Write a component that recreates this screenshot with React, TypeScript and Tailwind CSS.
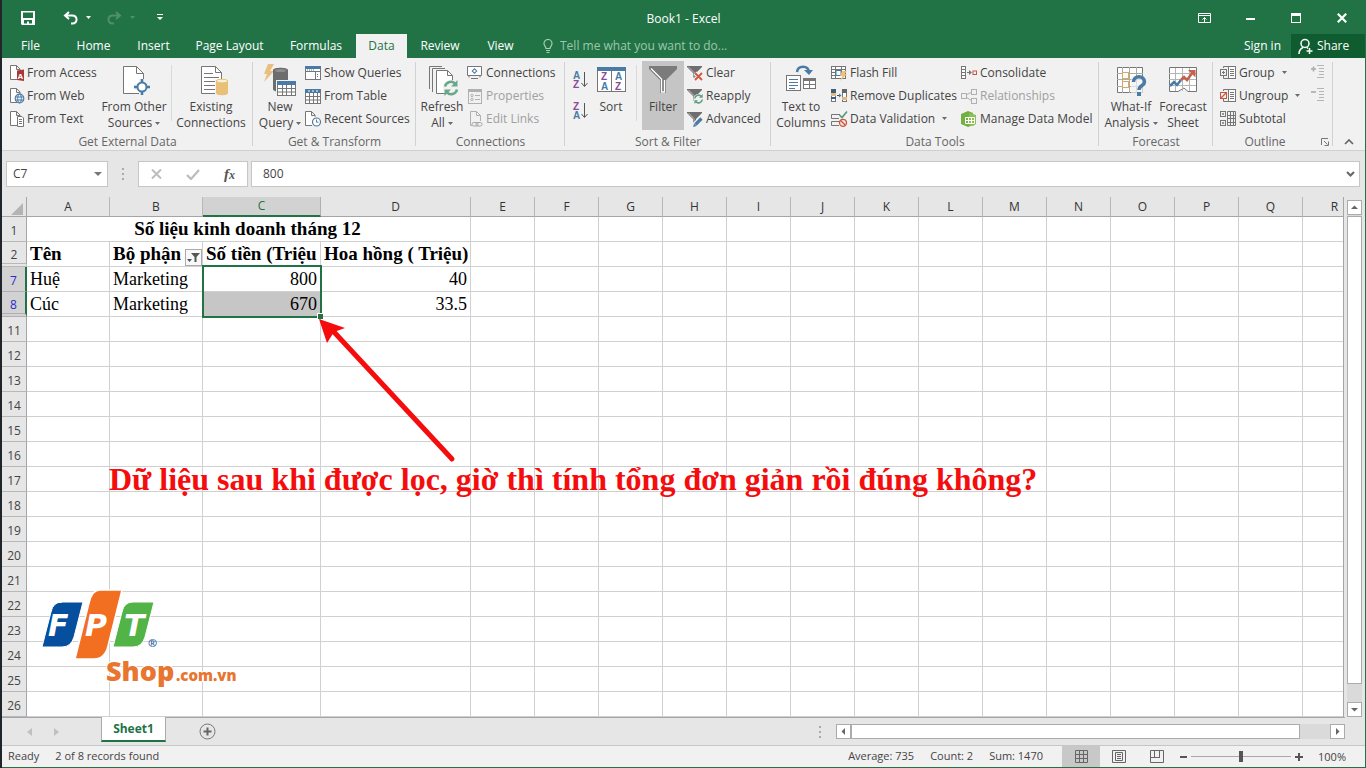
import React from 'react';

type Kids = { children?: React.ReactNode };

function Svg({ s = 16, w, children }: Kids & { s?: number; w?: number }) {
  return (
    <svg width={w ?? s} height={s} viewBox={`0 0 ${w ?? s} ${s}`} fill="none" className="shrink-0 overflow-visible" aria-hidden="true">
      {children}
    </svg>
  );
}

const G = '#767676';
const B = '#4a7ba6';
const P = '#8a4a9c';

function Caret({ dim = false }: { dim?: boolean }) {
  return (
    <svg width="5" height="3" viewBox="0 0 5 3" className="shrink-0" aria-hidden="true">
      <path d="M0 0h5L2.500 3z" fill={dim ? 'currentColor' : '#6a6a6a'} />
    </svg>
  );
}

/* ---------- small ribbon icons ---------- */
const SmallDoc = ({ children, w = 14 }: Kids & { w?: number }) => (
  <Svg w={w}>
    <path d="M7 14.500H.5V.5H6.500L10 4V6" fill="none" stroke={G} />
    <path d="M1 1H6.500V4.500H9.500V14H1z" fill="#fff" />
    <path d="M6.500.5V4.500H10" stroke={G} />
    {children}
  </Svg>
);
const AccessIcon = () => (
  <SmallDoc>
    <path d="M7 5.500L14 4.500V16L7 15z" fill="#a8373a" />
    <text x="7.500" y="13.500" fontSize="8" fontWeight="700" fontFamily="Liberation Sans, sans-serif" fill="#fff">A</text>
  </SmallDoc>
);
const WebIcon = () => (
  <SmallDoc>
    <circle cx="9.500" cy="10.500" r="4.300" fill="#f1f1f1" stroke={B} strokeWidth="1.200" />
    <ellipse cx="9.500" cy="10.500" rx="1.900" ry="4.300" stroke={B} />
    <path d="M5.500 9H13.500M5.500 12H13.500" stroke={B} />
  </SmallDoc>
);
const TextIcon = () => (
  <SmallDoc>
    <path d="M7.500 5.500H12L13.500 7V15.500H7.500z" fill="#fff" stroke={G} />
    <path d="M9 8.500H12M9 10.500H12M9 12.500H12" stroke={G} />
  </SmallDoc>
);
const ShowQueriesIcon = () => (
  <Svg>
    <rect x=".5" y="1.500" width="15" height="13" fill="#fff" stroke={G} />
    <path d="M0 1H16V4H0z" fill={B} />
    <path d="M0 6.500H16M10.500 7V14" stroke={G} />
    <path d="M2 5H9M12 9.500H14M12 11.500H14" stroke={B} strokeDasharray="1 1" />
  </Svg>
);
const TableIcon = () => (
  <Svg>
    <rect x=".5" y="1.500" width="15" height="14" fill="#fff" stroke={G} />
    <path d="M0 1H16V5H0z" fill={B} />
    <path d="M0 8.500H16M0 12H16M4.500 5V15M8.500 5V15M12.500 5V15" stroke={G} />
    <path d="M3 3H5M7 3H9M11 3H13" stroke="#fff" />
  </Svg>
);
const RecentIcon = () => (
  <SmallDoc w={16}>
    <circle cx="11.500" cy="11" r="4" fill="#fff" stroke={B} strokeWidth="1.200" />
    <path d="M11.500 8.500V11.200H13.500" stroke={G} />
  </SmallDoc>
);
const ConnIcon = () => (
  <Svg>
    <path d="M.5 1.500H14.500V10.500H.5z" fill="#fff" stroke={G} />
    <path d="M4 13.500H11M2 10V12.500M13 10V12.500" stroke={G} />
    <path d="M7.500 3L10.500 6L7.500 9L4.500 6z" fill={B} />
    <circle cx="7.500" cy="6" r="1.200" fill="#fff" />
  </Svg>
);
const PropIcon = () => (
  <Svg>
    <rect x="1.500" y="1.500" width="13" height="14" stroke="#b0b0b0" />
    <path d="M1 1H15V4H1z" fill="#b0b0b0" />
    <path d="M8 7.500H13M8 11.500H13" stroke="#b0b0b0" />
    <circle cx="5" cy="7.500" r="1.200" stroke="#b0b0b0" />
    <circle cx="5" cy="11.500" r="1.200" stroke="#b0b0b0" />
  </Svg>
);
const EditLinksIcon = () => (
  <Svg>
    <path d="M5 14.500H3.500V.5H9.500L13.500 4.500V10M9.500.5V4.500H13.500" stroke="#b0b0b0" />
    <rect x="5" y="11.500" width="6" height="3.500" rx="1.700" stroke="#a5a5a5" />
    <rect x="9" y="11.500" width="6" height="3.500" rx="1.700" stroke="#a5a5a5" />
  </Svg>
);
const Funnel = ({ children }: Kids) => (
  <Svg>
    <path d="M0 1H15V2L9 8V14L6 12V8L0 2z" fill="#6e6e6e" />
    <path d="M1.500 2L7 7.500V12" stroke="#bdbdbd" />
    {children}
  </Svg>
);
const ClearIcon = () => (
  <Funnel>
    <path d="M8 8L15 15M15 8L8 15" stroke="#f1f1f1" strokeWidth="4" />
    <path d="M8 8L15 15M15 8L8 15" stroke="#d1583c" strokeWidth="1.800" />
  </Funnel>
);
const ReapplyIcon = () => (
  <Funnel>
    <circle cx="11.500" cy="11" r="5" fill="#f1f1f1" />
    <path d="M7.800 10.500A3.800 3.800 0 0 1 14.500 8.500M15.300 11.500A3.800 3.800 0 0 1 8.600 13.500" stroke="#5fa083" strokeWidth="1.600" />
    <path d="M15.700 6V9.700H12zM7.400 16V12.300H11z" fill="#5fa083" />
  </Funnel>
);
const AdvancedIcon = () => (
  <Funnel>
    <path d="M7 15L15 7" stroke="#f1f1f1" strokeWidth="6" />
    <path d="M8.500 13.500L14.500 7.500" stroke={B} strokeWidth="3.200" />
    <path d="M6 16L7.200 12.500L9.600 14.900z" fill={B} />
  </Funnel>
);
const FlashIcon = () => (
  <Svg>
    <rect x=".5" y="1.500" width="14" height="12" fill="#fff" stroke={G} />
    <path d="M0 4.500H15M0 7.500H15M0 10.500H9M4.500 1V13M10.500 1V7" stroke={G} />
    <path d="M5 5.500H10V10.500H5z" fill="#fff" stroke={B} />
    <path d="M11 6H16L13.500 9H16L9 16L11.500 11H9z" fill="#efc078" />
  </Svg>
);
const RemoveDupIcon = () => (
  <Svg>
    <rect x=".5" y="1.500" width="4" height="12" fill="#fff" stroke={G} />
    <rect x="11.500" y="1.500" width="4" height="12" fill="#fff" stroke={G} />
    <path d="M0 1H5V5H0zM0 9H5V11H0z" fill="#3c5f80" />
    <path d="M0 5H5V8H0zM11 9H16V12H11z" fill="#e3b878" />
    <path d="M11 1H16V5H11z" fill="#666" />
    <path d="M6 7.500H9" stroke="#444" />
    <path d="M8 5.500L10.500 7.500L8 9.500z" fill={B} />
  </Svg>
);
const ValidationIcon = () => (
  <Svg>
    <path d="M9 3.500H.5V7.500H8M8 10.500H.5V14.500H8" stroke={G} fill="none" />
    <path d="M8.500 4L11 6.500L16 .5" stroke="#56967a" strokeWidth="1.600" />
    <circle cx="12" cy="11.800" r="3.500" fill="#fbe3dc" stroke="#c95640" strokeWidth="1.300" />
    <path d="M9.600 9.500L14.400 14.200" stroke="#c95640" strokeWidth="1.300" />
  </Svg>
);
const ConsolidateIcon = () => (
  <Svg>
    <rect x=".5" y="1.500" width="4" height="12" fill="#fff" stroke={G} />
    <path d="M0 4.500H5M0 7.500H5M0 10.500H5" stroke={G} />
    <path d="M6 7.500H10" stroke={G} />
    <path d="M8 5L11 7.500L8 10z" fill={G} />
    <rect x="12" y="6" width="3.500" height="3.500" stroke="#c95640" />
  </Svg>
);
const RelationIcon = () => (
  <Svg>
    <path d="M5 7L11 4M5 9L11 13" stroke="#b0b0b0" />
    <rect x=".5" y="5.500" width="5" height="5" fill="#f1f1f1" stroke="#b0b0b0" />
    <rect x="10.500" y="1.500" width="5" height="5" fill="#f1f1f1" stroke="#b0b0b0" />
    <rect x="10.500" y="10.500" width="5" height="5" fill="#f1f1f1" stroke="#b0b0b0" />
  </Svg>
);
const ModelIcon = () => (
  <Svg>
    <path d="M0 3L7 0L12 2V14L7 16L0 13z" fill="#72b043" />
    <path d="M8 2L15 4V13L12 15L8 14z" fill="#8cc057" />
    <path d="M4.500 6.500H13.500V12.500H4.500zM4.500 9.500H13.500M7.500 6V13M10.500 6V13" stroke="#fff" />
  </Svg>
);
const ListPart = () => (
  <>
    <rect x="8.500" y="1.500" width="7" height="12" fill="#fff" stroke={G} />
    <path d="M10 4.500H14M10 6.500H14M10 8.500H14M10 10.500H14" stroke={G} />
  </>
);
const GroupIcon = () => (
  <Svg>
    <ListPart />
    <path d="M8 1.500H3.500V3M3.500 11V13.500H8" stroke={G} />
    <rect x=".5" y="4.500" width="6" height="6" stroke={G} />
    <path d="M2 7.500H5M3.500 6V9" stroke={G} />
  </Svg>
);
const UngroupIcon = () => (
  <Svg>
    <ListPart />
    <path d="M8 1.500H3.500V3M3.500 11V13.500H8" stroke={G} />
    <rect x=".5" y="4.500" width="6" height="6" stroke="#c95640" />
    <path d="M1 10L6 5" stroke="#c95640" strokeWidth="1.300" />
  </Svg>
);
const SubtotalIcon = () => (
  <Svg>
    <rect x=".5" y=".5" width="5" height="5" stroke={G} />
    <rect x=".5" y="9.500" width="5" height="5" stroke={G} />
    <path d="M2 3H4M3 2V4M2 12H4M3 11V13" stroke={G} />
    <path d="M7.500.5H15.500V14.500H7.500zM7 4.500H16M7 7.500H16M7 11.500H16M10.500 0V15M13.500 0V15" stroke={G} />
  </Svg>
);
const DetailIcon = ({ plus = false }: { plus?: boolean }) => (
  <Svg>
    <path d={plus ? 'M1 4H6M3.500 1.500V6.500' : 'M1 4H6'} stroke="#ababab" strokeWidth="1.600" />
    <path d="M7 .5H14M9 3.500H14M9 6.500H14M9 9.500H14M7 12.500H14" stroke="#b5b5b5" />
  </Svg>
);
const SortAZ = ({ up = false }: { up?: boolean }) => (
  <svg width="15" height="18" viewBox="0 0 15 18" aria-hidden="true" className="block shrink-0 overflow-visible">
    <g fontSize="10" fontFamily="Liberation Sans, sans-serif" fontWeight="700">
      <text x="0" y="8" fill={up ? P : B}>{up ? 'Z' : 'A'}</text>
      <text x="0" y="17" fill={up ? B : P}>{up ? 'A' : 'Z'}</text>
    </g>
    <path d="M11.500 1V15M8.500 12L11.500 15.500L14.500 12" stroke="#555" fill="none" />
  </svg>
);

/* ---------- large ribbon icons ---------- */
const OtherIcon = () => (
  <Svg s={32}>
    <path d="M5.500 2.500H18.500L25.500 9.500V29.500H5.500z" fill="#fff" stroke={G} />
    <path d="M18.500 2.500V9.500H25.500" stroke={G} />
    <path d="M24 15V31M16 23H32" stroke="#f1f1f1" strokeWidth="6" />
    <path d="M24 15V31M16 23H32" stroke={B} strokeWidth="2.500" />
    <circle cx="24" cy="23" r="4.500" fill="#fff" stroke={B} strokeWidth="2" />
  </Svg>
);
const ExistingIcon = () => (
  <Svg s={32}>
    <path d="M6.500 2.500H20.500L26.500 8.500V29.500H6.500z" fill="#fff" stroke={G} />
    <path d="M20.500 2.500V8.500H26.500M9 9.500H18M9 13.500H24M9 17.500H20M9 21.500H20M9 25.500H20" stroke={G} />
    <path d="M20 15.500H34V31H20z" fill="#f1f1f1" />
    <path d="M21 17C21 14 33 14 33 17V29C33 32 21 32 21 29z" fill="#e8c078" />
    <ellipse cx="27" cy="17" rx="5" ry="1.300" fill="#faf0d8" />
  </Svg>
);
const NewQueryIcon = () => (
  <Svg s={32}>
    <path d="M4 0H10L6 7H10L0 18L3 10H0z" fill="#eabf7e" />
    <path d="M9 6C9 3 24 3 24 6V25C24 29 9 29 9 25z" fill="#6d6d6d" />
    <ellipse cx="16.500" cy="6.500" rx="5.500" ry="1.500" fill="#8d8d8d" />
    <rect x="12" y="16" width="21" height="16" fill="#f1f1f1" />
    <rect x="13.500" y="17.500" width="18" height="14" fill="#fff" stroke={G} />
    <path d="M13 17H32V21H13z" fill={B} />
    <path d="M13 24.500H32M13 28H32M18.500 21V31M22.500 21V31M27.500 21V31" stroke={G} />
  </Svg>
);
const RefreshIcon = () => (
  <Svg s={32}>
    <path d="M3.500 25V2.500H16M6.500 28V4.500H19" stroke={G} />
    <path d="M10.500 6.500H21.500L26.500 11.500V29.500H10.500z" fill="#fff" stroke={G} />
    <path d="M21.500 6.500V11.500H26.500" stroke={G} />
    <circle cx="25" cy="24" r="8" fill="#f1f1f1" />
    <path d="M19 22.500A6 6 0 0 1 29.500 20M31 25.500A6 6 0 0 1 20.500 28" stroke="#68a78b" strokeWidth="2.500" />
    <path d="M31.500 16V22.500H25zM18.500 32V25.500H25z" fill="#68a78b" />
  </Svg>
);
const SortIcon = () => (
  <Svg s={32}>
    <rect x="2.500" y="3.500" width="28" height="24" fill="#fff" stroke={G} />
    <path d="M2 3H31V7H2z" fill={B} />
    <path d="M16.500 7V27" stroke={G} />
    <g fontSize="10" fontWeight="700" fontFamily="Liberation Sans, sans-serif">
      <text x="6" y="16" fill={P}>Z</text>
      <text x="20" y="16" fill={B}>A</text>
      <text x="6" y="26" fill={B}>A</text>
      <text x="20" y="26" fill={P}>Z</text>
    </g>
  </Svg>
);
const FilterIcon = () => (
  <Svg s={32}>
    <path d="M2 2H30V5L19 16V29H13V16L2 5z" fill="#7b7b7b" />
    <path d="M4 4.500L14.500 15V28H17.500V16" stroke="#fff" strokeWidth="1.300" />
  </Svg>
);
const TextColIcon = () => (
  <Svg s={32}>
    <path d="M12 8C13 1 23 1 24 8" stroke={B} strokeWidth="2.500" />
    <path d="M19 6H28L24 11z" fill={B} />
    <rect x="1.500" y="11.500" width="14" height="15" fill="#fff" stroke={G} />
    <path d="M4 15.500H13M4 18.500H13M4 21.500H13M4 24.500H10" stroke={B} />
    <rect x="18.500" y="14.500" width="12" height="10" fill="#fff" stroke={G} />
    <path d="M18 14H31V17H18z" fill={G} />
    <path d="M18 20.500H31M24.500 14V25" stroke={G} />
  </Svg>
);
const WhatIfIcon = () => (
  <Svg s={32}>
    <path d="M2.500 3.500H27.500V28.500H2.500z" fill="#fff" stroke={G} />
    <path d="M2 9.500H28M2 15.500H28M2 22.500H28M7.500 3V29M14.500 3V29M21.500 3V29" stroke="#aaa" />
    <rect x="7.500" y="8.500" width="6" height="6" fill="#fff" stroke="#dba85e" />
    <rect x="7.500" y="17.500" width="6" height="6" fill="#fff" stroke="#dba85e" />
    <path d="M16 31V12H32V31z" fill="#f1f1f1" fillOpacity=".7" />
    <path d="M18.500 18C18.500 11 29.500 11 29.500 18C29.500 22 24 21 24 26" stroke={B} strokeWidth="3.500" />
    <rect x="22" y="28" width="4" height="4" fill={B} />
  </Svg>
);
const ForecastIcon = () => (
  <Svg s={32}>
    <path d="M2.500 3.500H29.500V27.500H21L17 24L11 27.500H2.500z" fill="#fff" stroke={G} />
    <path d="M2 9.500H29M2 15.500H29M2 21.500H29M8.500 4V27M15.500 4V27M22.500 4V27" stroke="#b5b5b5" />
    <path d="M3 22L7 18L10 21L14 16" stroke={B} strokeWidth="2.500" />
    <path d="M14 16L17 13L20 16L26 8" stroke="#c5604a" strokeWidth="2.500" />
    <path d="M21 6H28.500V13.500z" fill="#c5604a" />
  </Svg>
);

/* ---------- ribbon building blocks ---------- */
function Group({ label, className, children }: Kids & { label: string; className: string }) {
  return (
    <section aria-label={label} className={`relative flex flex-col shrink-0 ${className}`}>
      <div className="flex h-[76px] pt-[3px]">{children}</div>
      <div className="h-4 text-center text-[#666] leading-4">{label}</div>
      <span className="absolute right-0 top-1 bottom-1 w-px bg-[#d2d2d2]" />
    </section>
  );
}

function Big({ icon, a, b, caret, className, active }: { icon: React.ReactNode; a: string; b?: string; caret?: boolean; className: string; active?: boolean }) {
  return (
    <button aria-pressed={active} className={`flex h-[69px] shrink-0 flex-col items-center pt-[3px] leading-4 ${className}`}>
      {icon}
      <span className="pt-[3px] whitespace-nowrap">{a}</span>
      <span className="flex items-center gap-[3px] whitespace-nowrap">
        {b}
        {caret && <Caret />}
      </span>
    </button>
  );
}

function Small({ icon, label, caret, disabled }: { icon: React.ReactNode; label: string; caret?: boolean; disabled?: boolean }) {
  return (
    <button disabled={disabled} className="flex h-[23px] items-center gap-[3px] whitespace-nowrap disabled:text-[#a0a0a0]">
      {icon}
      <span>{label}</span>
      {caret && <span className="pl-1"><Caret /></span>}
    </button>
  );
}

const Stack = ({ className, children }: Kids & { className: string }) => (
  <div className={`flex shrink-0 flex-col items-start ${className}`}>{children}</div>
);
const Sep = ({ className }: { className: string }) => <span className={`mt-1 h-14 w-px shrink-0 bg-[#dadada] ${className}`} />;

function Ribbon() {
  return (
    <div className="flex h-[93px] overflow-hidden border-b border-[#d0d0d0] bg-[#f1f1f1] text-[12px] text-[#444]">
      <Group label="Get External Data" className="w-[251px]">
        <Stack className="w-[98px] pl-2">
          <Small icon={<AccessIcon />} label="From Access" />
          <Small icon={<WebIcon />} label="From Web" />
          <Small icon={<TextIcon />} label="From Text" />
        </Stack>
        <Big className="w-[68px]" icon={<OtherIcon />} a="From Other" b="Sources" caret />
        <Sep className="ml-[3px]" />
        <Big className="w-[78px]" icon={<ExistingIcon />} a="Existing" b="Connections" />
      </Group>
      <Group label="Get & Transform" className="w-[163px]">
        <Big className="ml-1 w-[46px]" icon={<NewQueryIcon />} a="New" b="Query" caret />
        <Stack className="ml-[2px]">
          <Small icon={<ShowQueriesIcon />} label="Show Queries" />
          <Small icon={<TableIcon />} label="From Table" />
          <Small icon={<RecentIcon />} label="Recent Sources" />
        </Stack>
      </Group>
      <Group label="Connections" className="w-[149px]">
        <Big className="ml-[3px] w-[46px]" icon={<RefreshIcon />} a="Refresh" b="All" caret />
        <Stack className="ml-[2px]">
          <Small icon={<ConnIcon />} label="Connections" />
          <Small icon={<PropIcon />} label="Properties" disabled />
          <Small icon={<EditLinksIcon />} label="Edit Links" disabled />
        </Stack>
      </Group>
      <Group label="Sort & Filter" className="w-[206px]">
        <div className="ml-2 flex w-[18px] flex-col gap-[13px] pt-[10px]">
          <button aria-label="Sort ascending"><SortAZ /></button>
          <button aria-label="Sort descending"><SortAZ up /></button>
        </div>
        <Big className="w-[40px]" icon={<SortIcon />} a="Sort" />
        <Sep className="mx-[5px]" />
        <Big className="w-[42px] bg-[#c5c5c5]" icon={<FilterIcon />} a="Filter" active />
        <Stack className="ml-[3px]">
          <Small icon={<ClearIcon />} label="Clear" />
          <Small icon={<ReapplyIcon />} label="Reapply" />
          <Small icon={<AdvancedIcon />} label="Advanced" />
        </Stack>
      </Group>
      <Group label="Data Tools" className="w-[328px]">
        <Big className="ml-1 w-[52px]" icon={<TextColIcon />} a="Text to" b="Columns" />
        <Stack className="ml-1 w-[130px]">
          <Small icon={<FlashIcon />} label="Flash Fill" />
          <Small icon={<RemoveDupIcon />} label="Remove Duplicates" />
          <Small icon={<ValidationIcon />} label="Data Validation" caret />
        </Stack>
        <Stack className="">
          <Small icon={<ConsolidateIcon />} label="Consolidate" />
          <Small icon={<RelationIcon />} label="Relationships" disabled />
          <Small icon={<ModelIcon />} label="Manage Data Model" />
        </Stack>
      </Group>
      <Group label="Forecast" className="w-[114px]">
        <Big className="ml-[5px] w-[54px]" icon={<WhatIfIcon />} a="What-If" b="Analysis" caret />
        <Big className="w-[50px]" icon={<ForecastIcon />} a="Forecast" b="Sheet" />
      </Group>
      <Group label="Outline" className="w-[120px] pr-4">
        <Stack className="ml-[7px] w-[90px]">
          <Small icon={<GroupIcon />} label="Group" caret />
          <Small icon={<UngroupIcon />} label="Ungroup" caret />
          <Small icon={<SubtotalIcon />} label="Subtotal" />
        </Stack>
        <Stack className="">
          <button aria-label="Show Detail" className="flex h-[23px] items-center"><DetailIcon plus /></button>
          <button aria-label="Hide Detail" className="flex h-[23px] items-center"><DetailIcon /></button>
        </Stack>
        <button aria-label="Outline settings" className="absolute right-1 bottom-1">
          <svg width="8" height="8" viewBox="0 0 8 8" fill="none" aria-hidden="true">
            <path d="M.5 7V.5H7M3 3L6.500 6.500M7.500 3.500V7.500H3.500" stroke="#777" />
          </svg>
        </button>
      </Group>
      <div className="flex flex-1 items-end justify-center pb-[5px]">
        <button aria-label="Collapse the Ribbon">
          <svg width="10" height="6" viewBox="0 0 10 6" fill="none" aria-hidden="true"><path d="M1 5L5 1L9 5" stroke="#666" strokeWidth="1.700" /></svg>
        </button>
      </div>
    </div>
  );
}

/* ---------- title bar and tabs ---------- */
function TitleBar() {
  return (
    <header className="grid h-[34px] grid-cols-3 text-[12px] text-white">
      <div className="flex items-center pl-[19px]">
        <button aria-label="Save">
          <svg width="14" height="14" viewBox="0 0 14 14" aria-hidden="true">
            <path fillRule="evenodd" d="M0 0H14V14H1L0 13zM2 1.500V7H12V1.500zM3 9V12.500H6V10.500H8V12.500H11V9z" fill="#fff" />
          </svg>
        </button>
        <button aria-label="Undo" className="ml-7 flex items-center gap-2">
          <svg width="15" height="14" viewBox="0 0 15 14" fill="none" aria-hidden="true">
            <path d="M6 1L2 4.500L6 8M2 4.500H9C15 4.500 15 12.500 9.500 12.500H8" stroke="#fff" strokeWidth="2" />
          </svg>
          <Caret dim />
        </button>
        <button aria-label="Redo" disabled className="ml-4 flex items-center gap-2 text-[#4f9069]">
          <svg width="15" height="14" viewBox="0 0 15 14" fill="none" aria-hidden="true">
            <path d="M9 1L13 4.500L9 8M13 4.500H6C0 4.500 0 12.500 5.500 12.500H7" stroke="#4f9069" strokeWidth="2" />
          </svg>
          <Caret dim />
        </button>
        <button aria-label="Customize Quick Access Toolbar" className="ml-[22px]">
          <svg width="6" height="7" viewBox="0 0 6 7" aria-hidden="true"><path d="M0 0H6V1H0zM0 3H6L3 6z" fill="#fff" /></svg>
        </button>
      </div>
      <h1 className="pt-[3px] text-center leading-8">Book1 - Excel</h1>
      <div className="flex justify-end">
        <button aria-label="Ribbon Display Options" className="flex w-[46px] items-center justify-center">
          <svg width="13" height="10" viewBox="0 0 13 10" fill="none" aria-hidden="true">
            <path d="M.5.5H12.500V9.500H.5zM0 2.500H13M6.500 9V4.500M4.500 6.500L6.500 4.500L8.500 6.500" stroke="#fff" />
          </svg>
        </button>
        <button aria-label="Minimize" className="flex w-[46px] items-center justify-center">
          <span className="mt-[3px] h-[2px] w-[9px] bg-white" />
        </button>
        <button aria-label="Maximize" className="flex w-[46px] items-center justify-center">
          <span className="h-[10px] w-[10px] border border-t-[3px] border-white" />
        </button>
        <button aria-label="Close" className="flex w-[46px] items-center justify-center">
          <svg width="10" height="10" viewBox="0 0 10 10" aria-hidden="true"><path d="M.8.8L9.200 9.200M9.200.8L.8 9.200" stroke="#fff" strokeWidth="2.200" /></svg>
        </button>
      </div>
    </header>
  );
}

const tabs = [
  { name: 'File', w: 'w-[57px] mr-1' },
  { name: 'Home', w: 'w-[61px]' },
  { name: 'Insert', w: 'w-[59px]' },
  { name: 'Page Layout', w: 'w-[93px]' },
  { name: 'Formulas', w: 'w-[80px]' },
  { name: 'Data', w: 'w-[51px]' },
  { name: 'Review', w: 'w-[66px]' },
  { name: 'View', w: 'w-[55px]' },
];

function TabBar() {
  return (
    <nav className="flex h-6 text-[12px] text-white">
      {tabs.map((t) => (
        <button
          key={t.name}
          className={`${t.w} shrink-0 whitespace-nowrap text-center ${t.name === 'Data' ? 'bg-[#f1f1f1] text-[#217346]' : ''}`}
        >
          {t.name}
        </button>
      ))}
      <label className="ml-[15px] flex flex-1 items-center gap-[7px]">
        <svg width="10" height="14" viewBox="0 0 10 14" fill="none" aria-hidden="true">
          <path d="M3 9.500C3 7.500 1 7 1 4.500A4 4 0 0 1 9 4.500C9 7 7 7.500 7 9.500zM3 11.500H7M3.500 13.500H6.500" stroke="#a6cdb5" strokeWidth="1.200" />
        </svg>
        <input
          aria-label="Tell me what you want to do"
          placeholder="Tell me what you want to do..."
          className="w-48 bg-transparent outline-none placeholder:text-[#9cc7ad]"
        />
      </label>
      <button className="px-[10px] whitespace-nowrap">Sign in</button>
      <button className="flex w-[74px] items-center gap-1 bg-[#0e5c2f] pl-[7px]">
        <svg width="15" height="17" viewBox="0 0 15 17" fill="none" aria-hidden="true">
          <circle cx="7" cy="5.500" r="4" stroke="#fff" strokeWidth="1.500" />
          <path d="M1 16C1 12 3 10.500 5 9.500M9 9.500L10 10.500M11.500 10V16M8.500 13H14.500" stroke="#fff" strokeWidth="1.500" />
        </svg>
        Share
      </button>
    </nav>
  );
}

/* ---------- formula bar ---------- */
const Grip = () => (
  <span className="flex w-[2px] shrink-0 flex-col gap-[3px]">
    <i className="h-[2px] bg-[#aaa]" />
    <i className="h-[2px] bg-[#aaa]" />
    <i className="h-[2px] bg-[#aaa]" />
  </span>
);

function FormulaBar() {
  return (
    <div className="flex h-[46px] items-center bg-[#e6e6e6] pr-[5px] pl-1 text-[12px] text-[#444]">
      <div className="flex h-[26px] w-[102px] shrink-0 items-center border border-[#c6c6c6] bg-white pr-[5px] pl-[6px]">
        <input aria-label="Name Box" defaultValue="C7" className="w-full min-w-0 bg-transparent outline-none" />
        <button aria-label="Name list">
          <svg width="8" height="4" viewBox="0 0 8 4" aria-hidden="true"><path d="M0 0H8L4 4z" fill="#777" /></svg>
        </button>
      </div>
      <div className="px-[14px]"><Grip /></div>
      <div className="flex h-[26px] w-[110px] shrink-0 items-center justify-around border border-[#c6c6c6] bg-white">
        <button aria-label="Cancel">
          <svg width="11" height="10" viewBox="0 0 11 10" aria-hidden="true"><path d="M1 .5L10 9.500M10 .5L1 9.500" stroke="#bcbcbc" strokeWidth="2" /></svg>
        </button>
        <button aria-label="Enter">
          <svg width="14" height="11" viewBox="0 0 14 11" fill="none" aria-hidden="true"><path d="M1 6L5 10L13 1" stroke="#bcbcbc" strokeWidth="2.200" /></svg>
        </button>
        <button aria-label="Insert Function" className="font-['Liberation_Serif',serif] text-[15px] font-bold italic leading-4 text-[#555]">
          f<span className="text-[12px]">x</span>
        </button>
      </div>
      <div className="ml-[3px] flex h-[26px] flex-1 items-center border border-[#c6c6c6] bg-white pr-1 pl-[11px]">
        <input aria-label="Formula Bar" defaultValue="800" className="w-full min-w-0 bg-transparent outline-none" />
        <button aria-label="Expand Formula Bar">
          <svg width="9" height="6" viewBox="0 0 9 6" fill="none" aria-hidden="true"><path d="M1 1L4.500 4.500L8 1" stroke="#666" strokeWidth="2" /></svg>
        </button>
      </div>
    </div>
  );
}

/* ---------- worksheet ---------- */
const cols = 'ABCDEFGHIJKLMNOPQR'.split('');
const colW = [83, 93, 118, 150];
const rows = [1, 2, 7, 8, 11, 12, 13, 14, 15, 16, 17, 18, 19, 20, 21, 22, 23, 24, 25, 26];
const cells: Record<number, string[]> = {
  2: ['Tên', 'Bộ phận', 'Số tiền (Triệu', 'Hoa hồng ( Triệu)'],
  7: ['Huệ', 'Marketing', '800', '40'],
  8: ['Cúc', 'Marketing', '670', '33.5'],
};

function cellClass(r: number, c: number) {
  const base = 'relative h-[25px] border-r border-b border-[#d0d0d0] p-0 pl-[3px] leading-6 whitespace-nowrap';
  const bold = r === 2 ? 'text-[19px] font-bold' : '';
  const align = r > 2 && c > 1 ? 'pr-[3px] text-right' : 'text-left';
  const fill = r === 8 && c === 2 ? 'bg-[#c6c6c6]' : '';
  return `${base} ${bold} ${align} ${fill}`;
}

function Sheet() {
  return (
    <table className="table-fixed w-[1365px] border-separate border-spacing-0 font-['Liberation_Serif',serif] text-[18px] text-black">
      <colgroup>
        <col className="w-[25px]" />
        {cols.map((c, i) => (
          <col key={c} style={{ width: colW[i] ?? 64 }} />
        ))}
      </colgroup>
      <thead className="font-['Open_Sans',sans-serif] text-[12px]">
        <tr>
          <td className="h-5 border-r border-b border-[#a5a5a5] bg-[#e6e6e6] p-0">
            <svg width="12" height="12" viewBox="0 0 12 12" className="ml-[9px] mt-1" aria-hidden="true"><path d="M12 0V12H0z" fill="#b4b4b4" /></svg>
          </td>
          {cols.map((c) => (
            <th
              key={c}
              scope="col"
              className={
                c === 'C'
                  ? 'h-5 border-r border-b-2 border-r-[#b0b0b0] border-b-[#217346] bg-[#d2d2d2] p-0 font-normal leading-4 text-[#217346]'
                  : 'h-5 border-r border-b border-r-[#b8b8b8] border-b-[#a5a5a5] bg-[#e6e6e6] p-0 font-normal leading-4 text-[#333]'
              }
            >
              {c}
            </th>
          ))}
        </tr>
      </thead>
      <tbody>
        {rows.map((r) => (
          <tr key={r}>
            <th
              scope="row"
              className={`h-[25px] border-r p-0 pt-1 font-['Open_Sans',sans-serif] text-[12px] font-normal leading-4 ${
                r === 7 || r === 8
                  ? 'border-r-2 border-r-[#217346] border-b-[#b0b0b0] bg-[#d2d2d2] text-[#2a2ad0]'
                  : 'border-r-[#a5a5a5] border-b-[#b8b8b8] bg-[#e6e6e6] text-[#444]'
              } ${r === 2 || r === 8 ? 'border-b-4 border-double' : 'border-b'}`}
            >
              {r}
            </th>
            {r === 1 && (
              <td colSpan={4} className="h-[25px] border-r border-b border-[#d0d0d0] p-0 pr-[2px] text-center text-[19px] font-bold leading-6">
                Số liệu kinh doanh tháng 12
              </td>
            )}
            {cols.slice(r === 1 ? 4 : 0).map((c, i) => (
              <td key={c} className={cellClass(r, r === 1 ? i + 4 : i)}>
                {r !== 1 && cells[r]?.[i]}
                {r === 2 && i === 1 && (
                  <button aria-label="Filter Bộ phận" className="absolute right-0 bottom-0 flex h-[17px] w-[17px] items-center justify-center border border-[#ababab] bg-[#f8f8f8]">
                    <svg width="13" height="11" viewBox="0 0 13 11" aria-hidden="true">
                      <path d="M4 1H13L9.500 5V10H7.500V5zM0 7H5L2.500 10z" fill="#555" />
                    </svg>
                  </button>
                )}
                {r === 7 && i === 2 && (
                  <span className="pointer-events-none absolute -top-[2px] -left-px z-10 h-[53px] w-[120px] border-2 border-[#217346]">
                    <span className="absolute -right-[3px] -bottom-[3px] h-[6px] w-[6px] border-t border-l border-white bg-[#217346]" />
                  </span>
                )}
              </td>
            ))}
          </tr>
        ))}
      </tbody>
    </table>
  );
}

const Tri = ({ d }: { d: string }) => (
  <svg width="7" height="7" viewBox="0 0 7 7" aria-hidden="true"><path d={d} fill="#666" /></svg>
);

function Logo() {
  return (
    <svg width="200" height="104" viewBox="0 0 200 104" className="absolute left-[38px] top-[390px] overflow-visible" aria-label="FPT Shop.com.vn">
      <path d="M16 15H43L34 50Q31 60 22 60H2L11 25Q13 15 22 15z" fill="#064e9e" stroke="#fff" />
      <path d="M93 15H114L105 50Q102 60 93 60H73L82 25Q84 15 93 15z" fill="#52b447" stroke="#fff" />
      <path d="M60 3H82L68 59Q65 72 54 72H35L49 16Q52 3 60 3z" fill="#f26f21" stroke="#fff" strokeWidth="1.500" />
      <g fill="#fff" fontFamily="DejaVu Sans, sans-serif" fontWeight="700" fontStyle="italic" fontSize="30">
        <text x="8" y="49">F</text>
        <text x="45" y="49">P</text>
        <text x="84" y="49">T</text>
      </g>
      <text x="108" y="60" fontSize="11" fontWeight="700" fontFamily="Open Sans, sans-serif" fill="#2a62aa">®</text>
      <g fill="#e87530" stroke="#fff" strokeWidth="2" paintOrder="stroke" fontFamily="Open Sans, sans-serif" fontWeight="800">
        <text x="66" y="94" fontSize="27">Shop</text>
        <text x="136" y="94" fontSize="15">.com.vn</text>
      </g>
    </svg>
  );
}

function Workspace() {
  return (
    <main className="flex flex-1 bg-[#e6e6e6]">
      <div className="relative min-w-0 flex-1 overflow-hidden border-r border-[#a5a5a5] bg-white">
        <Sheet />
        <svg width="150" height="150" viewBox="0 0 150 150" className="absolute left-[312px] top-[118px]" aria-hidden="true">
          <path d="M20 17L138 144" stroke="#f50d0d" strokeWidth="5" strokeLinecap="round" />
          <path d="M5 4L31 13L20 17L13 28z" fill="#f50d0d" />
        </svg>
        <p className="absolute left-[107px] top-[262px] whitespace-nowrap font-['Liberation_Serif',serif] text-[32px] font-bold leading-10 text-[#f50d0d]">
          Dữ liệu sau khi được lọc, giờ thì tính tổng đơn giản rồi đúng không?
        </p>
        <Logo />
      </div>
      <div className="mt-[3px] mr-[3px] ml-[3px] flex w-[15px] flex-col bg-[#dadada]">
        <button aria-label="Scroll up" className="flex h-[15px] items-center justify-center border border-[#ababab] bg-white"><Tri d="M0 5H7L3.500 1.500z" /></button>
        <div className="mt-px h-[468px] border border-[#ababab] bg-white" />
        <button aria-label="Scroll down" className="mt-auto flex h-[15px] items-center justify-center border border-[#ababab] bg-white"><Tri d="M0 2H7L3.500 5.500z" /></button>
      </div>
    </main>
  );
}

function SheetTabs() {
  return (
    <div className="flex h-7 bg-[#e6e6e6]">
      <div className="flex w-[99px] shrink-0 items-center gap-[22px] border-t border-[#a5a5a5] pl-[25px]">
        <button aria-label="Previous sheet" disabled><svg width="5" height="8" viewBox="0 0 5 8" aria-hidden="true"><path d="M5 0V8L0 4z" fill="#c0c0c0" /></svg></button>
        <button aria-label="Next sheet" disabled><svg width="5" height="8" viewBox="0 0 5 8" aria-hidden="true"><path d="M0 0V8L5 4z" fill="#c0c0c0" /></svg></button>
      </div>
      <button className="h-[25px] w-[65px] shrink-0 border-r border-b-2 border-l border-r-[#ababab] border-b-[#217346] border-l-[#ababab] bg-white text-[12px] font-bold text-[#217346]">Sheet1</button>
      <div className="flex flex-1 items-center border-t border-[#a5a5a5] pl-[33px]">
        <button aria-label="New sheet">
          <svg width="17" height="17" viewBox="0 0 17 17" fill="none" aria-hidden="true">
            <circle cx="8.500" cy="8.500" r="7.500" stroke="#767676" />
            <path d="M4.500 8.500H12.500M8.500 4.500V12.500" stroke="#666" strokeWidth="2" />
          </svg>
        </button>
      </div>
      <div className="flex w-[526px] shrink-0 items-center border-t border-[#a5a5a5]">
        <Grip />
        <div className="ml-[15px] flex h-[15px] flex-1 bg-[#dadada]">
          <button aria-label="Scroll left" className="flex w-[15px] items-center justify-center border border-[#ababab] bg-white"><Tri d="M5 0V7L1.500 3.500z" /></button>
          <div className="w-[449px] border border-[#ababab] bg-white" />
          <button aria-label="Scroll right" className="ml-auto flex w-[15px] items-center justify-center border border-[#ababab] bg-white"><Tri d="M2 0V7L5.500 3.500z" /></button>
        </div>
      </div>
      <div className="w-[20px] shrink-0" />
    </div>
  );
}

function StatusBar() {
  return (
    <footer className="flex h-[23px] items-stretch border-t border-b border-t-[#c6c6c6] border-b-[#217346] bg-[#f1f1f1] text-[11px] leading-5 text-[#444]">
      <span className="pl-[6px]">Ready</span>
      <span className="flex-1 pl-4">2 of 8 records found</span>
      <span className="pr-4">Average: 735</span>
      <span className="pr-4">Count: 2</span>
      <span className="pr-[19px]">Sum: 1470</span>
      <button aria-label="Normal view" className="flex w-[38px] items-center justify-center bg-[#c8c8c8]">
        <svg width="13" height="13" viewBox="0 0 13 13" fill="none" aria-hidden="true"><path d="M.5.5H12.500V12.500H.5zM0 4.500H13M0 8.500H13M4.500 0V13M8.500 0V13" stroke="#666" /></svg>
      </button>
      <button aria-label="Page Layout view" className="flex w-[38px] items-center justify-center">
        <svg width="14" height="13" viewBox="0 0 14 13" fill="none" aria-hidden="true"><path d="M.5.5H13.500V12.500H.5zM3.500 2.500H10.500V10.500H3.500zM5 4.500H9M5 6.500H9M5 8.500H9" stroke="#666" /></svg>
      </button>
      <button aria-label="Page Break Preview" className="flex w-[38px] items-center justify-center">
        <svg width="14" height="13" viewBox="0 0 14 13" fill="none" aria-hidden="true"><path d="M.5.5H13.500V12.500H.5zM4.500 0V7.500M9.500 0V7.500M0 7.500H10" stroke="#666" /></svg>
      </button>
      <div className="flex items-center gap-1 pl-1">
        <button aria-label="Zoom out" className="flex h-4 w-[7px] items-center"><span className="h-[2px] w-full bg-[#555]" /></button>
        <input
          type="range"
          aria-label="Zoom"
          min="0"
          max="200"
          defaultValue="100"
          className="h-4 w-[100px] appearance-none bg-transparent [&::-webkit-slider-runnable-track]:h-px [&::-webkit-slider-runnable-track]:bg-[#a8a8a8] [&::-webkit-slider-thumb]:-mt-[5px] [&::-webkit-slider-thumb]:h-[11px] [&::-webkit-slider-thumb]:w-1 [&::-webkit-slider-thumb]:appearance-none [&::-webkit-slider-thumb]:bg-[#555]"
        />
        <button aria-label="Zoom in">
          <svg width="8" height="8" viewBox="0 0 8 8" className="block" aria-hidden="true"><path d="M0 4H8M4 0V8" stroke="#555" strokeWidth="2" /></svg>
        </button>
      </div>
      <button className="w-[62px] pr-[19px] text-right">100%</button>
    </footer>
  );
}

export default function App() {
  return (
    <div className="flex min-h-screen flex-col overflow-hidden border-r border-l-2 border-r-[#217346] border-l-[#20252a] bg-[#217346] font-['Open_Sans','Noto_Sans',sans-serif]">
      <TitleBar />
      <TabBar />
      <Ribbon />
      <FormulaBar />
      <Workspace />
      <SheetTabs />
      <StatusBar />
    </div>
  );
}
